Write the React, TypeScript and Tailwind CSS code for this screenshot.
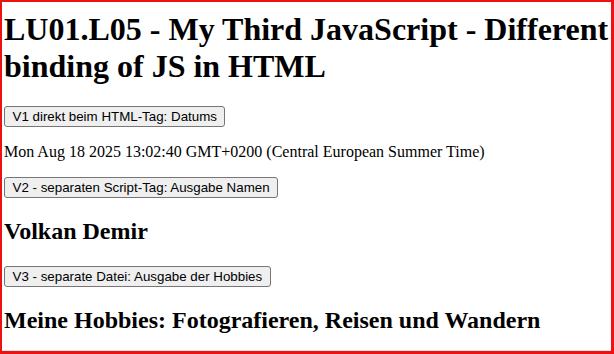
export default function App() {
    const btn = "block border border-[#767676] rounded-[3px] bg-[#efefef] px-[7.5px] py-[1px] text-[13.333px] leading-[17px] text-black font-['Liberation_Sans',Arial,sans-serif]";

    return (
        <div className="w-[614px] h-[354px] overflow-hidden bg-white border-l-2 border-t-2 border-r-[3px] border-b-[3px] border-[#ee1111]">
            <div className="h-full border-b border-[#e4e4e4] pl-[2px] pt-[9px] text-black font-['Liberation_Serif','Times_New_Roman',serif]">
                {/* Heading */}
                <h1 className="text-[32px] font-bold leading-[36.8px] mb-[21.44px]">
                    LU01.L05 - My Third JavaScript - Different binding of JS in HTML
                </h1>

                {/* V1 */}
                <button className={btn}>V1 direkt beim HTML-Tag: Datums</button>
                <p className="text-[16px] leading-[18.4px] my-[16px]">
                    Mon Aug 18 2025 13:02:40 GMT+0200 (Central European Summer Time)
                </p>

                {/* V2 */}
                <button className={btn}>V2 - separaten Script-Tag: Ausgabe Namen</button>
                <h2 className="text-[24px] font-bold leading-[27.6px] my-[19.92px]">Volkan Demir</h2>

                {/* V3 */}
                <button className={btn}>V3 - separate Datei: Ausgabe der Hobbies</button>
                <h2 className="text-[24px] font-bold leading-[27.6px] my-[19.92px]">
                    Meine Hobbies: Fotografieren, Reisen und Wandern
                </h2>
            </div>
        </div>
    );
}
